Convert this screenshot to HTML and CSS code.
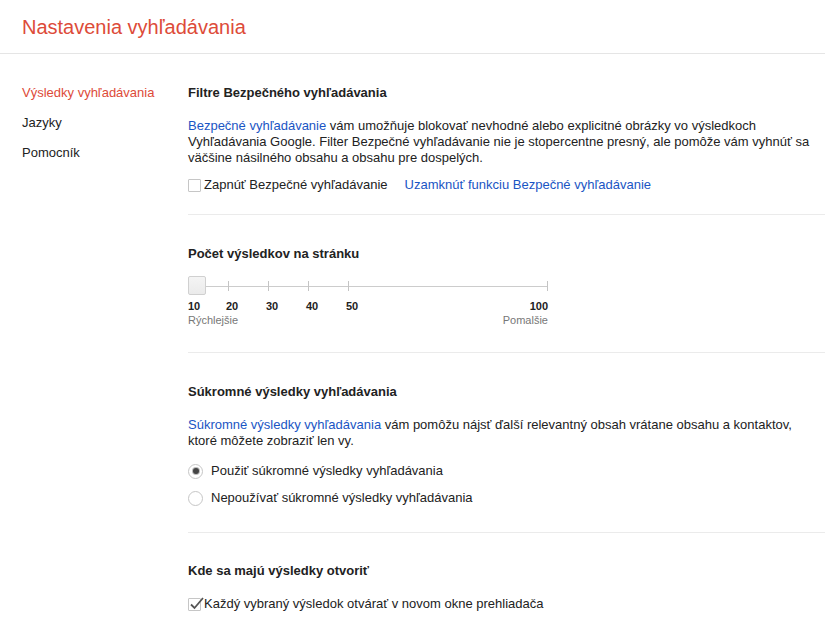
FILE: index.html
```html
<!DOCTYPE html>
<html lang="sk">
<head>
    <meta charset="UTF-8">
    <meta name="viewport" content="width=device-width, initial-scale=1.0">
    <title>Nastavenia vyhľadávania</title>
    <link rel="stylesheet" href="styles.css">
</head>
<body>
    <div class="header">
        <div class="title">Nastavenia vyhľadávania</div>
    </div>
    <div class="page">
        <div class="nav">
            <a class="nav-item active" href="#">Výsledky vyhľadávania</a>
            <a class="nav-item" href="#">Jazyky</a>
            <a class="nav-item" href="#">Pomocník</a>
        </div>
        <div class="content">
            <!-- Filtre -->
            <div class="section">
                <div class="section-title">Filtre Bezpečného vyhľadávania</div>
                <p class="desc"><a href="#">Bezpečné vyhľadávanie</a> vám umožňuje blokovať nevhodné alebo explicitné obrázky vo výsledkoch<br>Vyhľadávania Google. Filter Bezpečné vyhľadávanie nie je stopercentne presný, ale pomôže vám vyhnúť sa väčšine násilného obsahu a obsahu pre dospelých.</p>
                <div class="option-row">
                    <label class="check">
                        <span class="box"></span>
                        Zapnúť Bezpečné vyhľadávanie
                    </label>
                    <a class="lock-link" href="#">Uzamknúť funkciu Bezpečné vyhľadávanie</a>
                </div>
            </div>

            <!-- Pocet vysledkov -->
            <div class="section">
                <div class="section-title compact">Počet výsledkov na stránku</div>
                <div class="slider">
                    <div class="track">
                        <div class="cell"><span class="thumb"></span></div>
                        <div class="cell tick"></div>
                        <div class="cell tick"></div>
                        <div class="cell tick"></div>
                        <div class="cell tick last"></div>
                    </div>
                    <div class="scale">
                        <span>10</span>
                        <span>20</span>
                        <span>30</span>
                        <span>40</span>
                        <span>50</span>
                        <span class="right">100</span>
                    </div>
                    <div class="hints">
                        <span>Rýchlejšie</span>
                        <span>Pomalšie</span>
                    </div>
                </div>
            </div>

            <!-- Sukromne vysledky -->
            <div class="section">
                <div class="section-title">Súkromné výsledky vyhľadávania</div>
                <p class="desc"><a href="#">Súkromné výsledky vyhľadávania</a> vám pomôžu nájsť ďalší relevantný obsah vrátane obsahu a kontaktov, ktoré môžete zobraziť len vy.</p>
                <div class="radios">
                    <label class="radio checked"><span class="dot"></span>Použiť súkromné výsledky vyhľadávania</label>
                    <label class="radio"><span class="dot"></span>Nepoužívať súkromné výsledky vyhľadávania</label>
                </div>
            </div>

            <!-- Kde otvorit -->
            <div class="section last">
                <div class="section-title">Kde sa majú výsledky otvoriť</div>
                <label class="check">
                    <span class="box checked">
                        <svg width="17" height="15" viewBox="0 0 17 15"><path d="M3 8.5 L6.5 12 L15 2" fill="none" stroke="#555" stroke-width="1.8"/></svg>
                    </span>
                    Každý vybraný výsledok otvárať v novom okne prehliadača
                </label>
            </div>
        </div>
    </div>
</body>
</html>
```

FILE: styles.css
```css
body {
    margin: 0;
    font-family: "Liberation Sans", Arial, sans-serif;
    font-size: 13px;
    color: #222;
    background-color: #fff;
}

a {
    color: #1a55c4;
    text-decoration: none;
}

.header {
    height: 54px;
    border-bottom: 1px solid #e5e5e5;
    padding-left: 22px;
    box-sizing: border-box;
}

.title {
    font-size: 20px;
    color: #dd4b39;
    padding-top: 15px;
    line-height: 24px;
}

.page {
    display: flex;
}

.nav {
    width: 188px;
    flex-shrink: 0;
    padding: 31px 0 0 22px;
    box-sizing: border-box;
    display: flex;
    flex-direction: column;
    gap: 14px;
}

.nav-item {
    color: #222;
    line-height: 16px;
}

.nav-item.active {
    color: #dd4b39;
}

.content {
    flex: 1;
}

.section {
    padding: 31px 0 21px;
    border-bottom: 1px solid #ebebeb;
}

.section.last {
    padding-top: 30px;
    border-bottom: none;
}

.section-title {
    font-weight: bold;
    line-height: 16px;
    margin-bottom: 17px;
}

.section-title.compact {
    margin-bottom: 15px;
}

.desc {
    margin: 0 0 11px;
    line-height: 16px;
    max-width: 630px;
}

.option-row {
    display: flex;
    gap: 17px;
    line-height: 16px;
}

.check {
    display: flex;
    align-items: center;
    gap: 3px;
    line-height: 16px;
}

.box {
    width: 11px;
    height: 11px;
    border: 1px solid #c6c6c6;
    border-radius: 1px;
    position: relative;
}

.box svg {
    position: absolute;
    left: -1px;
    top: -3px;
}

/* slider */
.slider {
    width: 360px;
    padding-bottom: 4px;
}

.track {
    display: grid;
    grid-template-columns: 40px 40px 40px 40px 1fr;
    height: 18px;
    background: linear-gradient(#ccc, #ccc) no-repeat 18px 9px / calc(100% - 18px) 1px;
}

.tick {
    border-left: 1px solid #c4c4c4;
    height: 10px;
    margin-top: 4px;
}

.tick.last {
    border-right: 1px solid #c4c4c4;
}

.thumb {
    display: block;
    width: 16px;
    height: 17px;
    border: 1px solid #d0d0d0;
    border-radius: 2px;
    background: linear-gradient(#f4f4f4, #ebebeb);
    margin-top: -1px;
}

.scale {
    display: grid;
    grid-template-columns: 38px 40px 40px 40px auto 1fr;
    font-size: 11px;
    font-weight: bold;
    color: #222;
    margin-top: 5px;
    line-height: 13px;
}

.scale .right {
    text-align: right;
}

.hints {
    display: flex;
    justify-content: space-between;
    font-size: 11px;
    color: #777;
    line-height: 13px;
    margin-top: 1px;
}

/* radios */
.radios {
    display: flex;
    flex-direction: column;
    gap: 11px;
    margin-top: 14px;
    padding-bottom: 5px;
}

.radio {
    display: flex;
    align-items: center;
    gap: 8px;
    line-height: 16px;
}

.dot {
    width: 13px;
    height: 13px;
    border: 1px solid #c6c6c6;
    border-radius: 50%;
    display: flex;
    align-items: center;
    justify-content: center;
    background: #fff;
}

.radio.checked .dot::after {
    content: "";
    width: 6px;
    height: 6px;
    border-radius: 50%;
    background: #444;
    box-shadow: 0 0 0 1px #bbb;
}
```
